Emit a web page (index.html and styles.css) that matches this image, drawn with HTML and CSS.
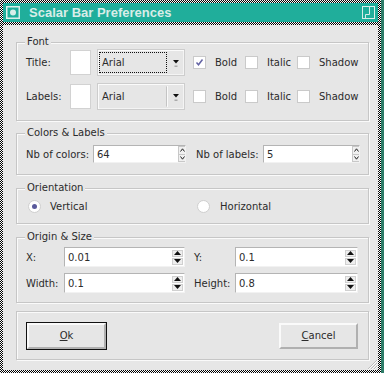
FILE: index.html
```html
<!DOCTYPE html>
<html lang="en">
<head>
    <meta charset="UTF-8">
    <title>Scalar Bar Preferences</title>
    <link rel="stylesheet" href="styles.css">
</head>
<body>
<div class="frame">
    <!-- title bar -->
    <div class="titlebar">
        <svg class="app-icon" width="14" height="13" viewBox="0 0 14 13"><rect x="0.75" y="0.75" width="12.5" height="11.5" fill="none" stroke="#d9ede8" stroke-width="1.5"/><circle cx="7" cy="6.5" r="3" fill="#d9ede8"/></svg>
        <span class="title">Scalar Bar Preferences</span>
        <svg class="max-icon" width="13" height="13" viewBox="0 0 13 13"><rect x="0.5" y="0.5" width="12" height="12" fill="none" stroke="#d9ede8"/><path d="M7.5 0.5 V8.5 H3.5 V12" fill="none" stroke="#d9ede8"/></svg>
    </div>

    <div class="client">
        <!-- Font -->
        <div class="group group-font">
            <span class="legend">Font</span>
            <div class="font-row">
                <span class="label lbl-font">Title:</span>
                <span class="swatch"></span>
                <div class="combo">
                    <span class="combo-text focused">Arial</span>
                    <span class="combo-arrow"><svg width="8" height="9" viewBox="0 0 8 9"><path d="M1 1 H7 L4 4.5 Z" fill="#111"/><rect x="2.5" y="6.5" width="3" height="1.5" fill="#aaa"/></svg></span>
                </div>
                <span class="check"><span class="box"><svg width="11" height="11" viewBox="0 0 11 11"><path d="M2.5 5.5 L4.5 7.8 L8.5 2.5" fill="none" stroke="#6464a4" stroke-width="1.5"/></svg></span>Bold</span>
                <span class="check"><span class="box"></span>Italic</span>
                <span class="check last"><span class="box"></span>Shadow</span>
            </div>
            <div class="font-row">
                <span class="label lbl-font">Labels:</span>
                <span class="swatch"></span>
                <div class="combo">
                    <span class="combo-text">Arial</span>
                    <span class="combo-arrow"><svg width="8" height="9" viewBox="0 0 8 9"><path d="M1 1 H7 L4 4.5 Z" fill="#111"/><rect x="2.5" y="6.5" width="3" height="1.5" fill="#aaa"/></svg></span>
                </div>
                <span class="check"><span class="box"></span>Bold</span>
                <span class="check"><span class="box"></span>Italic</span>
                <span class="check last"><span class="box"></span>Shadow</span>
            </div>
        </div>

        <!-- Colors & Labels -->
        <div class="group group-colors">
            <span class="legend">Colors &amp; Labels</span>
            <span class="label lbl-nb">Nb of colors:</span>
            <div class="spin spin-colors">
                <span class="spin-value">64</span>
                <span class="chevrons">
                    <span class="chev"><svg width="5" height="4" viewBox="0 0 5 4"><path d="M0.5 3.5 L2.5 0.8 L4.5 3.5" fill="none" stroke="#222"/></svg></span>
                    <span class="chev"><svg width="5" height="4" viewBox="0 0 5 4"><path d="M0.5 0.5 L2.5 3.2 L4.5 0.5" fill="none" stroke="#222"/></svg></span>
                </span>
            </div>
            <span class="label lbl-nb2">Nb of labels:</span>
            <div class="spin spin-labels">
                <span class="spin-value">5</span>
                <span class="chevrons">
                    <span class="chev"><svg width="5" height="4" viewBox="0 0 5 4"><path d="M0.5 3.5 L2.5 0.8 L4.5 3.5" fill="none" stroke="#222"/></svg></span>
                    <span class="chev"><svg width="5" height="4" viewBox="0 0 5 4"><path d="M0.5 0.5 L2.5 3.2 L4.5 0.5" fill="none" stroke="#222"/></svg></span>
                </span>
            </div>
        </div>

        <!-- Orientation -->
        <div class="group group-orient">
            <span class="legend">Orientation</span>
            <span class="radio-item first"><span class="radio checked"></span>Vertical</span>
            <span class="radio-item"><span class="radio"></span>Horizontal</span>
        </div>

        <!-- Origin & Size -->
        <div class="group group-origin">
            <span class="legend">Origin &amp; Size</span>
            <div class="origin-row">
                <span class="label lbl-xy">X:</span>
                <div class="spin num num-left"><span class="spin-value">0.01</span><span class="tris"><span class="tri"><svg width="7" height="4" viewBox="0 0 7 4"><path d="M0 4 H7 L3.5 0 Z" fill="#111"/></svg></span><span class="tri"><svg width="7" height="4" viewBox="0 0 7 4"><path d="M0 0 H7 L3.5 4 Z" fill="#111"/></svg></span></span></div>
                <span class="label lbl-xy2">Y:</span>
                <div class="spin num num-right"><span class="spin-value">0.1</span><span class="tris"><span class="tri"><svg width="7" height="4" viewBox="0 0 7 4"><path d="M0 4 H7 L3.5 0 Z" fill="#111"/></svg></span><span class="tri"><svg width="7" height="4" viewBox="0 0 7 4"><path d="M0 0 H7 L3.5 4 Z" fill="#111"/></svg></span></span></div>
            </div>
            <div class="origin-row">
                <span class="label lbl-xy">Width:</span>
                <div class="spin num num-left"><span class="spin-value">0.1</span><span class="tris"><span class="tri"><svg width="7" height="4" viewBox="0 0 7 4"><path d="M0 4 H7 L3.5 0 Z" fill="#111"/></svg></span><span class="tri"><svg width="7" height="4" viewBox="0 0 7 4"><path d="M0 0 H7 L3.5 4 Z" fill="#111"/></svg></span></span></div>
                <span class="label lbl-xy2">Height:</span>
                <div class="spin num num-right"><span class="spin-value">0.8</span><span class="tris"><span class="tri"><svg width="7" height="4" viewBox="0 0 7 4"><path d="M0 4 H7 L3.5 0 Z" fill="#111"/></svg></span><span class="tri"><svg width="7" height="4" viewBox="0 0 7 4"><path d="M0 0 H7 L3.5 4 Z" fill="#111"/></svg></span></span></div>
            </div>
        </div>

        <!-- buttons -->
        <div class="group group-buttons">
            <button class="btn btn-default"><span class="btn-inner"><u>O</u>k</span></button>
            <button class="btn btn-cancel"><u>C</u>ancel</button>
        </div>

        <svg class="grip" width="11" height="11" viewBox="0 0 11 11"><path d="M10 1 L1 10 M10 4 L4 10 M10 7 L7 10" stroke="#bdbdbd"/><path d="M11 1 L1 11 M11 4 L4 11 M11 7 L7 11" stroke="#fafafa"/></svg>
    </div>
</div>
</body>
</html>
```

FILE: styles.css
```css
body {
    margin: 0;
    width: 384px;
    height: 373px;
    background: #2f7d69;
    font-family: "DejaVu Sans", sans-serif;
    font-size: 10px;
    color: #2b2b2b;
    overflow: hidden;
}
/* window frame with dithered border */
.frame {
    width: 381px;
    height: 373px;
    box-sizing: border-box;
    padding: 3px;
    display: flex;
    flex-direction: column;
    gap: 3px;
    background: repeating-conic-gradient(#000 0% 25%, #fff 0% 50%) 0 0 / 2px 2px;
}
.titlebar {
    height: 19px;
    background: #20ae9b;
    display: flex;
    align-items: center;
    padding: 0 3px;
}
.app-icon {
    margin-right: 9px;
}
.title {
    font-family: "Liberation Sans", sans-serif;
    font-weight: bold;
    font-size: 13px;
    color: #d9ede8;
    flex: 1;
}
.client {
    flex: 1;
    background: #e6e6e6;
    padding: 17px 0 0 13px;
    position: relative;
}
/* etched group boxes */
.group {
    position: relative;
    width: 353px;
    box-sizing: border-box;
    border: 1px solid #c6c6c6;
    box-shadow: inset 1px 1px 0 #fafafa, 1px 1px 0 #fafafa;
}
.legend {
    position: absolute;
    top: -7px;
    left: 8px;
    padding: 0 2px;
    line-height: 12px;
    background: #e6e6e6;
}
.label {
    flex: none;
}
/* Font */
.group-font {
    height: 79px;
    padding: 6px 0 0 9px;
    display: flex;
    flex-direction: column;
    gap: 7px;
}
.font-row {
    display: flex;
    align-items: center;
    height: 27px;
}
.lbl-font {
    width: 44px;
}
.swatch {
    flex: none;
    width: 21px;
    height: 25px;
    box-sizing: border-box;
    background: #fff;
    border: 1px solid #d2d2d2;
    margin-right: 6px;
}
.combo {
    flex: none;
    width: 88px;
    height: 27px;
    box-sizing: border-box;
    display: flex;
    border: 1px solid #cdcdcd;
    box-shadow: inset 1px 1px 0 #fbfbfb, inset -1px -1px 0 #f4f4f4;
    margin-right: 8px;
}
.combo-text {
    width: 68px;
    box-sizing: border-box;
    margin: 2px 0 2px 1px;
    padding-left: 2px;
    display: flex;
    align-items: center;
    border: 1px dotted transparent;
    border-right: 1px solid #c4c4c4;
    box-shadow: 1px 0 0 #fafafa;
}
.combo-text.focused {
    border: 1px dotted #111;
    box-shadow: none;
}
.combo-arrow {
    flex: 1;
    display: flex;
    align-items: center;
    justify-content: center;
    padding-top: 2px;
}
.check {
    flex: none;
    display: flex;
    align-items: center;
    width: 52px;
    gap: 9px;
}
.check.last {
    width: auto;
}
.box {
    flex: none;
    width: 13px;
    height: 13px;
    box-sizing: border-box;
    background: #fff;
    border: 1px solid #cacaca;
    display: flex;
    align-items: center;
    justify-content: center;
}
/* Colors & Labels */
.group-colors {
    margin-top: 12px;
    height: 42px;
    padding: 0 0 0 9px;
    display: flex;
    align-items: center;
}
.lbl-nb {
    width: 67px;
}
.lbl-nb2 {
    width: 67px;
    margin-left: 10px;
}
.spin {
    flex: none;
    display: flex;
    box-sizing: border-box;
    background: #fff;
    border: 1px solid;
    border-color: #b4b4b4 #f2f2f2 #f2f2f2 #b4b4b4;
}
.spin-colors {
    width: 93px;
    height: 18px;
}
.spin-labels {
    width: 97px;
    height: 18px;
}
.spin-value {
    flex: 1;
    display: flex;
    align-items: center;
    padding-left: 3px;
}
.chevrons {
    width: 7px;
    display: flex;
    flex-direction: column;
}
.chev {
    flex: 1;
    display: flex;
    align-items: center;
    justify-content: center;
    background: #f0f0f0;
    border: 1px solid #c8c8c8;
    border-right: none;
}
.chev + .chev {
    border-top: none;
}
/* Orientation */
.group-orient {
    margin-top: 13px;
    height: 36px;
    padding: 0 0 0 11px;
    display: flex;
    align-items: center;
}
.radio-item {
    display: flex;
    align-items: center;
}
.radio-item.first {
    width: 169px;
    gap: 9px;
}
.radio-item + .radio-item {
    gap: 10px;
}
.radio {
    flex: none;
    width: 13px;
    height: 13px;
    box-sizing: border-box;
    border-radius: 50%;
    background: #fff;
    border: 1px solid #cfcfcf;
    display: flex;
    align-items: center;
    justify-content: center;
}
.radio.checked::before {
    content: "";
    width: 5px;
    height: 5px;
    border-radius: 50%;
    background: #5a5a9c;
}
/* Origin & Size */
.group-origin {
    margin-top: 13px;
    height: 66px;
    padding: 9px 0 0 9px;
    display: flex;
    flex-direction: column;
    gap: 6px;
}
.origin-row {
    display: flex;
    align-items: center;
    height: 20px;
}
.lbl-xy {
    width: 38px;
}
.lbl-xy2 {
    width: 41px;
    margin-left: 9px;
}
.num {
    height: 20px;
    padding-right: 1px;
    align-items: center;
}
.num-left {
    width: 121px;
}
.num-right {
    width: 123px;
}
.tris {
    width: 11px;
    display: flex;
    flex-direction: column;
    gap: 1px;
}
.tri {
    height: 7px;
    display: flex;
    align-items: center;
    justify-content: center;
    background: #eee;
    border: 1px solid #d0d0d0;
    box-sizing: border-box;
}
/* buttons */
.group-buttons {
    margin-top: 8px;
    height: 49px;
    padding: 0 10px 0 9px;
    display: flex;
    align-items: center;
    justify-content: space-between;
}
.btn {
    font-family: "DejaVu Sans", sans-serif;
    font-size: 10px;
    color: #2b2b2b;
    background: #e6e6e6;
    padding: 0;
    box-sizing: border-box;
    cursor: pointer;
}
.btn-default {
    width: 81px;
    height: 28px;
    border: 1px solid #111;
    display: flex;
}
.btn-inner {
    flex: 1;
    display: flex;
    align-items: center;
    justify-content: center;
    border: 2px solid;
    border-color: #fafafa #b0b0b0 #b0b0b0 #fafafa;
}
.btn-cancel {
    width: 79px;
    height: 26px;
    border: 2px solid;
    border-color: #fafafa #b0b0b0 #b0b0b0 #fafafa;
}
.grip {
    position: absolute;
    right: 0;
    bottom: 0;
}
```
